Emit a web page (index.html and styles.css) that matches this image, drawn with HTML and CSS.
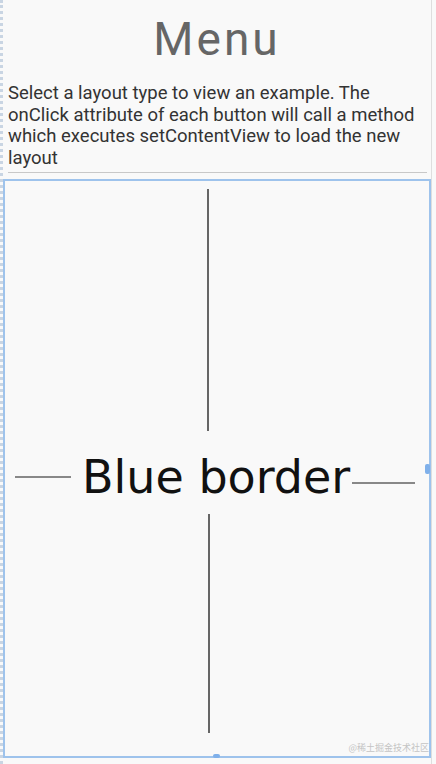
FILE: index.html
```html
<!DOCTYPE html>
<html>
<head>
<meta charset="utf-8">
<link rel="stylesheet" href="styles.css">
</head>
<body>
<div class="screen">
  <h1 class="title">Menu</h1>
  <p class="intro">Select a layout type to view an example. The onClick attribute of each button will call a method which executes setContentView to load the new layout</p>
  <div class="divider"></div>
  <div class="box">
    <div class="vline vline-top"></div>
    <div class="mid">
      <div class="hline hline-left"></div>
      <div class="label">Blue border</div>
      <div class="hline hline-right"></div>
    </div>
    <div class="vline vline-bottom"></div>
    <div class="handle handle-right"></div>
    <div class="handle handle-bottom"></div>
    <div class="watermark">@稀土掘金技术社区</div>
  </div>
</div>
</body>
</html>
```
FILE: styles.css
```css
html, body {
  margin: 0;
  padding: 0;
  background: #f9f9f9;
}
.screen {
  position: relative;
  width: 432px;
  height: 764px;
  box-sizing: border-box;
  border-left: 3px dotted #c9d5e3;
  border-right: 1px solid #dedede;
  display: flex;
  flex-direction: column;
  font-family: Roboto, "Liberation Sans", sans-serif;
}
.title {
  margin: 12px 0 0 0;
  font-size: 46px;
  line-height: 54px;
  font-weight: 400;
  letter-spacing: 3px;
  color: #666666;
  text-align: center;
}
.intro {
  margin: 17px 4px 0 5px;
  font-size: 18.5px;
  line-height: 21.5px;
  color: #333333;
}
.divider {
  margin: 3px 4px 0 5px;
  height: 1px;
  background: #c8c8c8;
}
.box {
  position: relative;
  margin-top: 6px;
  width: 428px;
  height: 579px;
  box-sizing: border-box;
  border: 2px solid #9ec3ec;
  padding-top: 8px;
  display: flex;
  flex-direction: column;
}
.vline {
  width: 2px;
  background: #666666;
}
.vline-top {
  margin-left: 202px;
  height: 242px;
}
.vline-bottom {
  margin-left: 203px;
  height: 219px;
}
.mid {
  height: 83px;
  display: flex;
  align-items: flex-start;
}
.hline {
  height: 1.5px;
  background: #888888;
}
.hline-left {
  margin-left: 10px;
  width: 56px;
  margin-top: 45px;
}
.hline-right {
  margin-left: 2px;
  width: 63px;
  margin-top: 51px;
}
.label {
  margin-left: 11px;
  margin-top: 23px;
  font-family: "DejaVu Sans", Verdana, sans-serif;
  font-size: 46px;
  line-height: 1;
  color: #111111;
  white-space: nowrap;
}
.handle {
  position: absolute;
  background: #7fb0ea;
  border-radius: 2px;
}
.handle-right {
  right: -1px;
  top: 283px;
  width: 5px;
  height: 10px;
}
.handle-bottom {
  bottom: -2px;
  left: 208px;
  width: 7px;
  height: 4px;
}
.watermark {
  position: absolute;
  right: 0;
  bottom: 2px;
  font-family: "Noto Sans CJK SC", sans-serif;
  font-size: 9px;
  line-height: 12px;
  color: #c4c4c4;
}
```
